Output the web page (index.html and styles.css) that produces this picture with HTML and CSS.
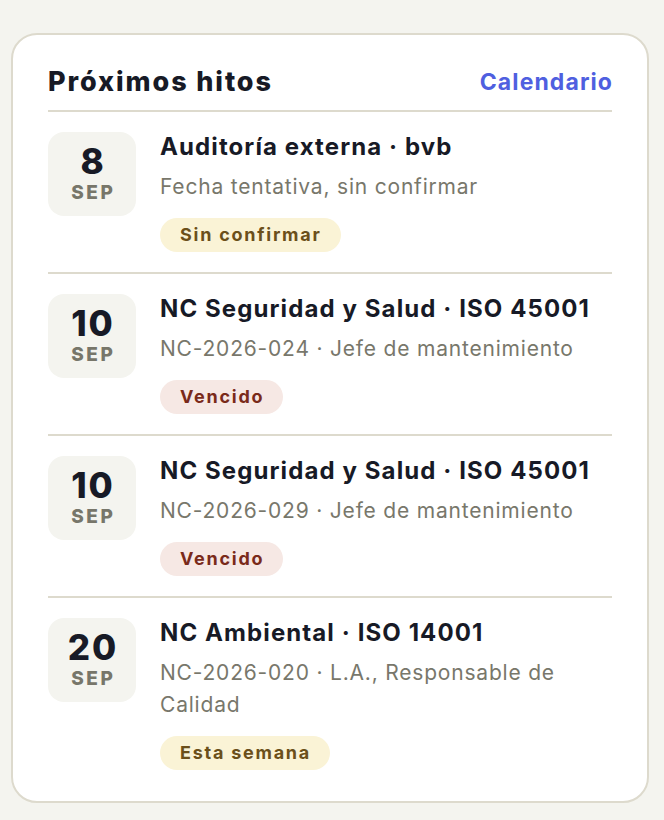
FILE: index.html
```html
<!DOCTYPE html>
<html lang="es">
<head>
<meta charset="utf-8">
<title>Próximos hitos</title>
<link rel="stylesheet" href="styles.css">
</head>
<body>
<section class="card">
  <header class="card-head">
    <h2 class="card-title">Próximos hitos</h2>
    <a class="card-link" href="#">Calendario</a>
  </header>
  <ul class="list">
    <li class="item">
      <div class="date"><span class="day">8</span><span class="month">SEP</span></div>
      <div class="info">
        <div class="title">Auditoría externa · bvb</div>
        <div class="sub">Fecha tentativa, sin confirmar</div>
        <span class="badge badge-warn">Sin confirmar</span>
      </div>
    </li>
    <li class="item">
      <div class="date"><span class="day">10</span><span class="month">SEP</span></div>
      <div class="info">
        <div class="title">NC Seguridad y Salud · ISO 45001</div>
        <div class="sub">NC-2026-024 · Jefe de mantenimiento</div>
        <span class="badge badge-late">Vencido</span>
      </div>
    </li>
    <li class="item">
      <div class="date"><span class="day">10</span><span class="month">SEP</span></div>
      <div class="info">
        <div class="title">NC Seguridad y Salud · ISO 45001</div>
        <div class="sub">NC-2026-029 · Jefe de mantenimiento</div>
        <span class="badge badge-late">Vencido</span>
      </div>
    </li>
    <li class="item">
      <div class="date"><span class="day">20</span><span class="month">SEP</span></div>
      <div class="info">
        <div class="title">NC Ambiental · ISO 14001</div>
        <div class="sub">NC-2026-020 · L.A., Responsable de Calidad</div>
        <span class="badge badge-warn">Esta semana</span>
      </div>
    </li>
  </ul>
</section>
</body>
</html>
```
FILE: styles.css
```css
* { box-sizing: border-box; }
html, body { margin: 0; padding: 0; }
body {
  background: #f4f4ef;
  font-family: Inter, "Liberation Sans", sans-serif;
  color: #171a26;
  padding: 33px 15px 0 11px;
}
.card {
  background: #ffffff;
  border: 2px solid #dddacd;
  border-radius: 26px;
  padding: 0 35px 31px 35px;
}
.card-head {
  display: flex;
  align-items: center;
  justify-content: space-between;
  padding: 30px 0 11px;
  border-bottom: 2px solid #dddacd;
}
.card-title {
  margin: 0;
  font-size: 27px;
  line-height: 34px;
  font-weight: 800;
  letter-spacing: 1.9px;
  color: #171a26;
}
.card-link {
  font-size: 23px;
  line-height: 34px;
  font-weight: 700;
  letter-spacing: 1.1px;
  margin-right: -1.1px;
  color: #4f5fe0;
  text-decoration: none;
}
.list { list-style: none; margin: 0; padding: 0; }
.item {
  display: flex;
  gap: 24px;
  padding: 20px 0;
  border-bottom: 2px solid #dddacd;
}
.item:last-child { border-bottom: 0; padding-bottom: 0; }
.date {
  flex: 0 0 88px;
  height: 84px;
  background: #f4f4ef;
  border-radius: 16px;
  display: flex;
  flex-direction: column;
  align-items: center;
  justify-content: center;
}
.day {
  font-size: 35px;
  line-height: 32px;
  font-weight: 800;
  letter-spacing: 2px;
  padding-left: 2px;
  color: #171a26;
}
.month {
  font-size: 19px;
  line-height: 22px;
  font-weight: 800;
  letter-spacing: 2.6px;
  padding-left: 2.6px;
  color: #77766a;
  margin-top: 5px;
}
.info { flex: 1; min-width: 0; display: flex; flex-direction: column; align-items: flex-start; }
.title {
  font-size: 24px;
  line-height: 30px;
  font-weight: 700;
  letter-spacing: 1.1px;
  color: #171a26;
}
.sub {
  margin-top: 9px;
  font-size: 21px;
  line-height: 32px;
  color: #78776b;
  letter-spacing: 0.8px;
}
.badge {
  margin-top: 15px;
  height: 34px;
  line-height: 34px;
  padding: 0 19px 0 20px;
  border-radius: 17px;
  font-size: 18px;
  font-weight: 700;
  letter-spacing: 1.75px;
}
.badge-warn { background: #faf3d6; color: #6b4f1a; }
.badge-late { background: #f6e8e4; color: #7a2a1a; }
```
